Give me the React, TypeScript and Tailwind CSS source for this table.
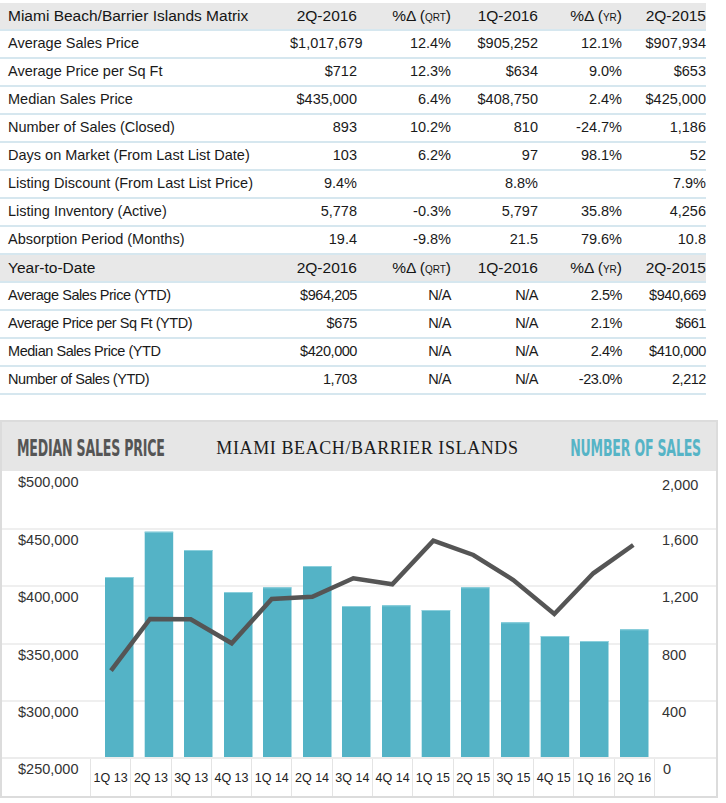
import React from "react";

type Row = { label: string; cells: string[] };

const quarterRows: Row[] = [
  { label: "Average Sales Price", cells: ["$1,017,679", "12.4%", "$905,252", "12.1%", "$907,934"] },
  { label: "Average Price per Sq Ft", cells: ["$712", "12.3%", "$634", "9.0%", "$653"] },
  { label: "Median Sales Price", cells: ["$435,000", "6.4%", "$408,750", "2.4%", "$425,000"] },
  { label: "Number of Sales (Closed)", cells: ["893", "10.2%", "810", "-24.7%", "1,186"] },
  { label: "Days on Market (From Last List Date)", cells: ["103", "6.2%", "97", "98.1%", "52"] },
  { label: "Listing Discount (From Last List Price)", cells: ["9.4%", "", "8.8%", "", "7.9%"] },
  { label: "Listing Inventory (Active)", cells: ["5,778", "-0.3%", "5,797", "35.8%", "4,256"] },
  { label: "Absorption Period (Months)", cells: ["19.4", "-9.8%", "21.5", "79.6%", "10.8"] },
];

const ytdRows: Row[] = [
  { label: "Average Sales Price (YTD)", cells: ["$964,205", "N/A", "N/A", "2.5%", "$940,669"] },
  { label: "Average Price per Sq Ft (YTD)", cells: ["$675", "N/A", "N/A", "2.1%", "$661"] },
  { label: "Median Sales Price (YTD", cells: ["$420,000", "N/A", "N/A", "2.4%", "$410,000"] },
  { label: "Number of Sales (YTD)", cells: ["1,703", "N/A", "N/A", "-23.0%", "2,212"] },
];

const colWidths = ["w-[67px]", "w-[94px]", "w-[87px]", "w-[84px]", "w-[84px]"];

const quarters = [
  "1Q 13", "2Q 13", "3Q 13", "4Q 13", "1Q 14", "2Q 14", "3Q 14",
  "4Q 14", "1Q 15", "2Q 15", "3Q 15", "4Q 15", "1Q 16", "2Q 16",
];

// bar left edge and top, in page pixels (plot spans x 90..654, y 471..757)
const bars: [number, number][] = [
  [105, 577], [144.7, 531.7], [184, 550], [224, 592], [263, 587.3], [303, 566], [342, 606],
  [382, 605.3], [421.7, 610], [461, 587.3], [501, 622.3], [540.7, 636], [580, 641], [620, 629.3],
];

const sales: [number, number][] = [
  [111, 670.7], [150, 619], [190.7, 619.3], [231.7, 643.3], [271.7, 599], [312.3, 596.7], [353.3, 578.3],
  [392.3, 584.3], [433.3, 540.7], [473.3, 555], [513.3, 580], [554.3, 614], [593.3, 573.3], [633.3, 545],
];

function Delta({ unit }: { unit: string }) {
  return (
    <span>
      %Δ (<span className="text-[10px]">{unit}</span>)
    </span>
  );
}

function HeaderRow({ title }: { title: string }) {
  const heads: React.ReactNode[] = ["2Q-2016", <Delta unit="QRT" />, "1Q-2016", <Delta unit="YR" />, "2Q-2015"];
  return (
    <div className="flex h-[28px] items-center border-b-2 border-[#d6e7ef] bg-[#e8e8e8] text-[15.5px] text-[#151515]">
      <div className="w-[290px] pl-2">{title}</div>
      {heads.map((h, i) => (
        <div key={i} className={`${colWidths[i]} text-right`}>
          {h}
        </div>
      ))}
    </div>
  );
}

function DataRow({ row, tight }: { row: Row; tight?: boolean }) {
  return (
    <div
      className={`flex h-[28px] items-center border-b-2 border-[#d6e7ef] text-[14.5px] text-[#1a1a1a] ${
        tight ? "tracking-[-0.45px]" : ""
      }`}
    >
      <div className="w-[290px] pl-2 whitespace-nowrap">{row.label}</div>
      {row.cells.map((c, i) => (
        <div key={i} className={`${colWidths[i]} text-right`}>
          {c}
        </div>
      ))}
    </div>
  );
}

const condensed = { fontFamily: '"DejaVu Sans Condensed", "DejaVu Sans", sans-serif' };

function Chart() {
  const left = ["$500,000", "$450,000", "$400,000", "$350,000", "$300,000"];
  const right = ["2,000", "1,600", "1,200", "800", "400"];
  return (
    <div className="mt-[25px] w-[718px] border-2 border-[#dcdcdc]">
      <div className="flex h-[49px] items-center justify-between bg-[#e6e6e6] px-[15px] pt-[3px]">
        <span
          className="inline-block scale-y-[1.66] whitespace-nowrap text-[14px] font-bold leading-none tracking-[-0.2px] text-[#555555]"
          style={condensed}
        >
          MEDIAN SALES PRICE
        </span>
        <div
          className="whitespace-nowrap text-[18px] tracking-[0.6px] text-[#1b1b1b]"
          style={{ fontFamily: '"Liberation Serif", serif' }}
        >
          MIAMI BEACH/BARRIER ISLANDS
        </div>
        <span
          className="inline-block scale-y-[1.66] whitespace-nowrap text-[14px] font-bold leading-none tracking-[-0.2px] text-[#56b4c6]"
          style={condensed}
        >
          NUMBER OF SALES
        </span>
      </div>

      <div className="relative">
        {left.map((l, i) => (
          <div
            key={l}
            className={`flex h-[57.2px] text-[14.5px] leading-normal text-[#333] ${
              i > 0 ? "border-t-2 border-[#efefef]" : ""
            }`}
          >
            <div className={`w-[88px] pl-[16px] ${i === 0 ? "pt-[1px]" : "pt-0"}`}>{l}</div>
            <div className="w-[564px]" />
            <div className={`flex-1 pl-[8px] ${i === 0 ? "pt-[4px]" : "pt-0"}`}>{right[i]}</div>
          </div>
        ))}
        <svg
          className="pointer-events-none absolute left-[88px] top-0"
          width={564}
          height={286}
          viewBox="90 471 564 286"
        >
          {bars.map(([x, y], i) => (
            <g key={i}>
              <rect x={x} y={y} width={28.5} height={757 - y} fill="#54b3c6" />
              <rect x={x} y={y} width={28.5} height={1} fill="#8bcfdc" />
            </g>
          ))}
          <polyline
            points={sales.map(([x, y]) => `${x},${y}`).join(" ")}
            fill="none"
            stroke="#555555"
            strokeWidth={4.5}
            strokeLinejoin="miter"
          />
        </svg>
        <div className="flex h-[39px] border-t-2 border-[#ececec] leading-normal text-[#333]">
          <div className="w-[88px] pl-[16px] text-[14.5px]">$250,000</div>
          <div className="flex w-[564px]">
            {quarters.map((q) => (
              <div
                key={q}
                className="flex flex-1 items-center justify-center border-l border-[#e4e4e4] pt-[2px] text-[12.5px] whitespace-nowrap text-[#222]"
              >
                {q}
              </div>
            ))}
          </div>
          <div className="flex-1 border-l border-[#e4e4e4] pl-[8px] text-[14.5px]">0</div>
        </div>
      </div>
    </div>
  );
}

export default function App() {
  return (
    <div className="min-h-screen bg-white pt-[3px]" style={{ fontFamily: '"Liberation Sans", Arial, sans-serif' }}>
      <div className="w-[716px] pr-[10px]">
        <HeaderRow title="Miami Beach/Barrier Islands Matrix" />
        {quarterRows.map((r) => (
          <DataRow key={r.label} row={r} />
        ))}
        <HeaderRow title="Year-to-Date" />
        {ytdRows.map((r) => (
          <DataRow key={r.label} row={r} tight />
        ))}
      </div>
      <Chart />
    </div>
  );
}
